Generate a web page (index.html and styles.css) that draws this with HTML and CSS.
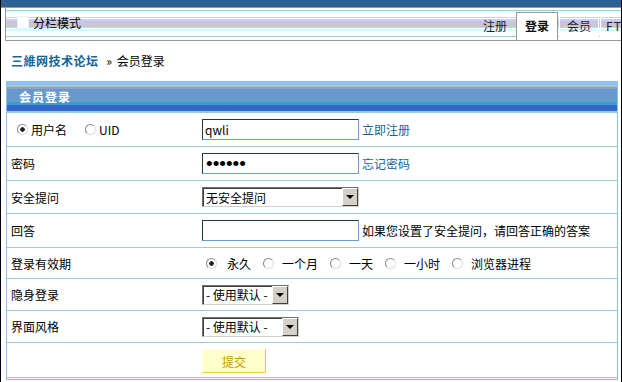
FILE: index.html
```html
<!DOCTYPE html>
<html lang="zh-CN">
<head>
    <meta charset="UTF-8">
    <meta name="viewport" content="width=device-width, initial-scale=1.0">
    <title>会员登录 - 三維网技术论坛</title>
    <link rel="stylesheet" href="styles.css">
</head>
<body>
<div class="page">
    <div class="topbar"></div>

    <!-- top menu with tabs -->
    <div class="menu">
        <div class="menu-left">
            <span class="check"></span>
            <span>分栏模式</span>
        </div>
        <div class="tabs">
            <span class="tab plain">注册</span>
            <span class="tab active">登录</span>
            <span class="tab">会员</span>
            <span class="tab last">FT</span>
        </div>
    </div>

    <div class="nav">
        <a href="#" class="nav-home">三維网技术论坛</a>
        <span class="nav-sep">&raquo;</span>
        <span>会员登录</span>
    </div>

    <form class="box" onsubmit="return false;">
        <div class="box-head">会员登录</div>

        <div class="row row-tall">
            <div class="label">
                <label class="opt-first"><input type="radio" name="loginfield" checked> 用户名</label>
                <label class="opt-first"><input type="radio" name="loginfield"> UID</label>
            </div>
            <div class="field">
                <input type="text" class="txt" value="qwli">
                <a href="#" class="aside-link">立即注册</a>
            </div>
        </div>

        <div class="row row-tall">
            <div class="label">密码</div>
            <div class="field">
                <input type="password" class="txt" value="123456">
                <a href="#" class="aside-link">忘记密码</a>
            </div>
        </div>

        <div class="row row-select">
            <div class="label">安全提问</div>
            <div class="field">
                <span class="select" style="width: 157px">
                    <select><option>无安全提问</option></select>
                    <span class="drop"></span>
                </span>
            </div>
        </div>

        <div class="row row-tall">
            <div class="label">回答</div>
            <div class="field">
                <input type="text" class="txt">
                <span class="aside-text">如果您设置了安全提问，请回答正确的答案</span>
            </div>
        </div>

        <div class="row row-radio">
            <div class="label">登录有效期</div>
            <div class="field radios">
                <label><input type="radio" name="cookietime" checked>永久</label>
                <label><input type="radio" name="cookietime">一个月</label>
                <label><input type="radio" name="cookietime">一天</label>
                <label><input type="radio" name="cookietime">一小时</label>
                <label><input type="radio" name="cookietime">浏览器进程</label>
            </div>
        </div>

        <div class="row row-short">
            <div class="label">隐身登录</div>
            <div class="field">
                <span class="select" style="width: 87px">
                    <select><option>- 使用默认 -</option></select>
                    <span class="drop"></span>
                </span>
            </div>
        </div>

        <div class="row row-short">
            <div class="label">界面风格</div>
            <div class="field">
                <span class="select" style="width: 97px">
                    <select><option>- 使用默认 -</option></select>
                    <span class="drop"></span>
                </span>
            </div>
        </div>

        <div class="row row-last">
            <div class="label"></div>
            <div class="field">
                <button type="submit" class="submit">提交</button>
            </div>
        </div>
    </form>
</div>
</body>
</html>
```

FILE: styles.css
```css
body {
    margin: 0;
    font-family: "Noto Sans CJK SC", "Noto Sans", sans-serif;
    font-size: 12px;
    color: #000;
    background: #fff;
}
.page {
    height: 382px;
    box-sizing: border-box;
    border-left: 1px solid #000;
    border-right: 1px solid #000;
    overflow: hidden;
}
.topbar {
    height: 7px;
    background-color: #2f6095;
    border-bottom: 1px solid #9a9a9a;
}

/* menu strip */
.menu {
    display: flex;
    height: 32px;
    margin-left: 4px;
    border-left: 1px solid #999;
    border-bottom: 1px solid #999;
    background: linear-gradient(to bottom,
        #fff 0 2px, #99cccc 2px 3px, #ddffff 3px 5px, #fff 5px 9px,
        #ccccff 9px 10px, #fff 10px 11px, #ccccff 11px 13px,
        #c8c8c8 13px 19px, #ccccff 19px 20px, #fff 20px 21px,
        #ccffff 21px 23px, #fff 23px 28px, #99cccc 28px 29px, #fff 29px 32px);
    white-space: nowrap;
    overflow: hidden;
}
.menu-left {
    flex: 0 0 469px;
    display: flex;
    align-items: center;
    gap: 4px;
    padding: 0 0 4px 11px;
    box-sizing: border-box;
}
.check {
    width: 10px;
    height: 11px;
    background: #fff;
    border: 1px solid #e6f4f4;
}
.tabs {
    display: flex;
    align-items: flex-end;
    flex-shrink: 0;
}
.tab {
    flex-shrink: 0;
    height: 21px;
    line-height: 17px;
    margin: 0 0 3px 1px;
    padding: 0 7px;
    border: 1px solid #fff;
    box-sizing: border-box;
    color: #222;
}
.tab.plain {
    margin-left: 0;
    padding: 0 8px 0 7px;
    border-color: transparent;
}
.tab.active {
    height: 29px;
    line-height: 26px;
    margin: 0 0 -1px 0;
    padding: 0 8px;
    background: #fff;
    border: 1px solid #999;
    border-bottom: none;
    font-weight: bold;
    color: #111;
}
.tab.last {
    padding: 0 10px 0 5px;
    letter-spacing: 1px;
}

/* breadcrumb */
.nav {
    height: 40px;
    line-height: 40px;
    padding-left: 10px;
}
.nav-home {
    color: #16659a;
    font-weight: bold;
    text-decoration: none;
    letter-spacing: 0.5px;
}
.nav-sep {
    margin: 0 2px 0 5px;
}

/* login box */
.box {
    display: block;
    margin: 0 3px 0 5px;
    border: 1px solid #8ec0ee;
    border-bottom-color: #9cbccc;
    padding-bottom: 1px;
}
.box-head {
    height: 31px;
    line-height: 30px;
    padding-left: 12px;
    color: #fff;
    font-weight: bold;
    letter-spacing: 1px;
    background: linear-gradient(to bottom,
        #8ec0ee 0 3px, #a2cccc 3px 5px, #9999cc 5px 7px, #6699cc 7px 20px,
        #3d9bd2 20px 23px, #3366cc 23px 29px, #99cccc 29px 31px);
}
.row {
    display: flex;
    align-items: center;
    height: 33px;
    border-bottom: 1px solid #99cccc;
}
.row-select { height: 32px; }
.row-radio { height: 30px; }
.row-short { height: 31px; }
.row-last { height: 34px; }
.label {
    flex: 0 0 195px;
    box-sizing: border-box;
    padding-left: 4px;
    display: flex;
    align-items: center;
}
.field {
    display: flex;
    align-items: center;
}

/* radios */
input[type="radio"] {
    appearance: none;
    width: 11px;
    height: 11px;
    margin: 0 3px 0 6px;
    border: 1px solid;
    border-color: #888 #ddd #ddd #888;
    border-radius: 50%;
    background: #fff;
}
input[type="radio"]:checked {
    background: radial-gradient(circle, #222 0 2px, #fff 2.5px);
}
.opt-first {
    display: flex;
    align-items: center;
    margin-right: 12px;
}
.radios {
    padding-left: 3px;
}
.radios label {
    display: flex;
    align-items: center;
}
.radios input[type="radio"] {
    margin: 0 8px 0 12px;
}
.radios label:first-child input[type="radio"] {
    margin-left: 1px;
    margin-right: 10px;
}

/* text inputs */
.txt {
    width: 157px;
    height: 21px;
    box-sizing: border-box;
    padding: 0 2px;
    border: 1px solid;
    border-color: #1e3e3e #6d9bcf #6d9bcf #1e3e3e;
    font-family: inherit;
    font-size: 12px;
    outline: none;
}
.txt[type="password"] {
    font-family: "Liberation Sans", Arial, sans-serif;
    font-size: 19px;
    padding-left: 3px;
}
.aside-link {
    margin-left: 3px;
    color: #16659a;
    text-decoration: none;
}
.aside-text {
    margin-left: 3px;
}

/* classic select box */
.select {
    display: inline-flex;
    height: 20px;
    box-sizing: border-box;
    border: 1px solid;
    border-color: #707070 #d4d0c8 #d4d0c8 #707070;
    box-shadow: inset 1px 1px #404040;
    background: #fff;
}
.select select {
    flex: 1;
    min-width: 0;
    appearance: none;
    border: none;
    background: transparent;
    padding: 0 0 0 3px;
    font-family: inherit;
    font-size: 12px;
    color: #000;
    outline: none;
}
.drop {
    flex: 0 0 16px;
    box-sizing: border-box;
    border: 1px solid;
    border-color: #fff #404040 #404040 #fff;
    background: #d4d0c8;
    display: flex;
    align-items: center;
    justify-content: center;
}
.drop::after {
    content: "";
    border-left: 4px solid transparent;
    border-right: 4px solid transparent;
    border-top: 4px solid #000;
}

/* submit button */
.submit {
    width: 64px;
    height: 24px;
    margin-top: 2px;
    padding: 0;
    border: 1px solid;
    border-color: #fffde0 #f2c744 #f2c744 #fffde0;
    background: #ffffcc;
    color: #c89a00;
    font-family: inherit;
    font-size: 12px;
    cursor: pointer;
}
```
